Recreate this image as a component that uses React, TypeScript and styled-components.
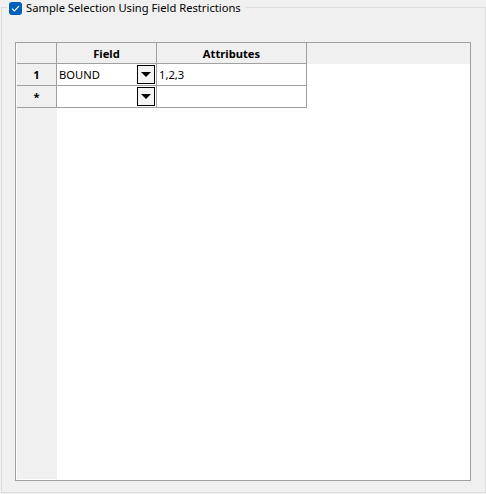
import React from "react";
import styled, { createGlobalStyle } from "styled-components";

const GlobalStyle = createGlobalStyle`
  html, body {
    margin: 0;
    padding: 0;
    background: #f0f0f0;
  }
  body {
    font-family: "Noto Sans", "Open Sans", sans-serif;
    font-size: 11.2px;
    color: #000;
  }
`;

interface Row {
  header: string;
  field: string;
  attributes: string;
}

const rows: Row[] = [
  { header: "1", field: "BOUND", attributes: "1,2,3" },
  { header: "*", field: "", attributes: "" },
];

const Page = styled.div`
  width: 486px;
  height: 494px;
  padding: 7px 0 0 1px;
  box-sizing: border-box;
`;

const GroupBox = styled.div`
  position: relative;
  width: 485px;
  height: 486px;
  box-sizing: border-box;
  border: 1px solid #dcdcdc;
  padding: 34px 0 0 13px;
`;

const Legend = styled.label`
  position: absolute;
  top: -8px;
  left: 5px;
  display: flex;
  align-items: center;
  gap: 4px;
  height: 16px;
  padding: 0 5px 0 2px;
  background: #f0f0f0;
  font-size: 11.2px;
  line-height: 16px;
  white-space: nowrap;
`;

const CheckBox = styled.span`
  display: flex;
  align-items: center;
  justify-content: center;
  width: 13px;
  height: 13px;
  border-radius: 3px;
  background: #005fb8;
`;

const Grid = styled.div`
  width: 456px;
  height: 439px;
  box-sizing: border-box;
  border: 1px solid #a0a0a0;
  background: #fff;
  padding: 0 0 1px 1px;
  display: flex;
  flex-direction: column;
`;

const HeaderRow = styled.div`
  display: flex;
  height: 21px;
  background: #f0f0f0;
`;

const DataRow = styled.div`
  display: flex;
  height: 22px;
`;

const Cell = styled.div<{ $w: number; $head?: boolean; $center?: boolean }>`
  width: ${(p) => p.$w}px;
  box-sizing: border-box;
  border-right: 1px solid #a0a0a0;
  border-bottom: 1px solid #a0a0a0;
  background: ${(p) => (p.$head ? "#f0f0f0" : "#fff")};
  font-weight: ${(p) => (p.$head ? 700 : 400)};
  display: flex;
  align-items: center;
  justify-content: ${(p) => (p.$center ? "center" : "flex-start")};
  padding: ${(p) => (p.$center ? "0" : "0 1px 0 2px")};
  white-space: nowrap;
`;

const CellText = styled.span`
  flex: 1;
`;

const DropButton = styled.span`
  width: 18px;
  height: 19px;
  box-sizing: border-box;
  border: 1px solid #000;
  background: #f4f4f4;
  display: flex;
  align-items: center;
  justify-content: center;
`;

const Arrow = styled.span`
  width: 0;
  height: 0;
  border-left: 5px solid transparent;
  border-right: 5px solid transparent;
  border-top: 5px solid #000;
`;

const Filler = styled.div`
  flex: 1;
  display: flex;
`;

const RowHeaderFill = styled.div`
  width: 40px;
  background: #f0f0f0;
`;

export default function App() {
  return (
    <>
      <GlobalStyle />
      <Page>
        <GroupBox>
          <Legend>
            <CheckBox>
              <svg width="9" height="7" viewBox="0 0 9 7">
                <path d="M1 3.6 L3.4 6 L8 1.2" fill="none" stroke="#fff" strokeWidth="1.2" />
              </svg>
            </CheckBox>
            Sample Selection Using Field Restrictions
          </Legend>
          <Grid>
            <HeaderRow>
              <Cell $w={40} $head $center />
              <Cell $w={100} $head $center>Field</Cell>
              <Cell $w={150} $head $center>Attributes</Cell>
            </HeaderRow>
            {rows.map((r) => (
              <DataRow key={r.header}>
                <Cell $w={40} $head $center>{r.header}</Cell>
                <Cell $w={100}>
                  <CellText>{r.field}</CellText>
                  <DropButton>
                    <Arrow />
                  </DropButton>
                </Cell>
                <Cell $w={150}>{r.attributes}</Cell>
              </DataRow>
            ))}
            <Filler>
              <RowHeaderFill />
            </Filler>
          </Grid>
        </GroupBox>
      </Page>
    </>
  );
}
